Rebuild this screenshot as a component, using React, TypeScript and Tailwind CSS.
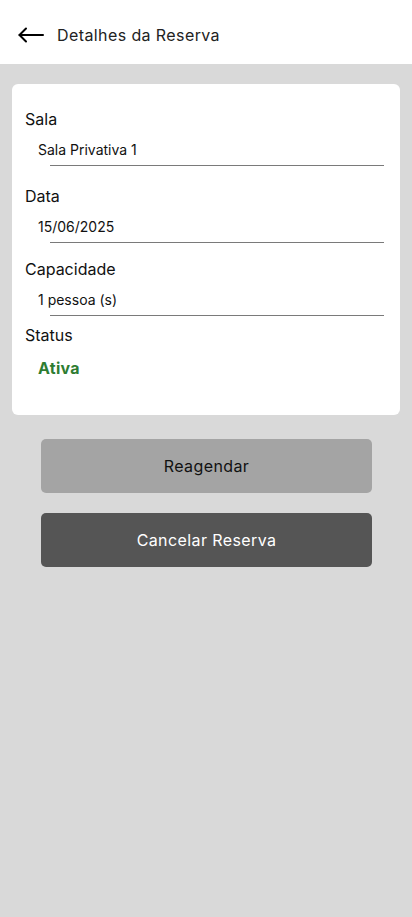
const font = { fontFamily: "Inter, 'Open Sans', sans-serif" };

function Field({ label, value, top }: { label: string; value: string; top: string }) {
    return (
        <div className={top}>
            <p className="text-[16px] leading-[24px] text-[#111]">{label}</p>
            <p className="mt-[9px] ml-[13px] text-[14px] leading-[20px] text-[#111]">{value}</p>
            <div className="ml-[25px] mt-[5px] h-[1px] bg-[#7a7a7a]" />
        </div>
    );
}

export default function App() {
    return (
        <div style={font} className="w-[412px] min-h-[917px] bg-[#d9d9d9] flex flex-col">
            <header className="h-[64px] bg-white flex items-center pl-[18px] pt-[6px]">
                <svg width="26" height="16" viewBox="0 0 26 16" fill="none" stroke="#000" strokeWidth="2" strokeLinecap="round" strokeLinejoin="round">
                    <path d="M25 8H1.5" />
                    <path d="M8 1.5L1.5 8L8 14.5" />
                </svg>
                <h1 className="ml-[13px] text-[16px] tracking-[0.4px] text-[#222]">Detalhes da Reserva</h1>
            </header>

            <main className="px-[12px] pt-[20px]">
                <div className="bg-white rounded-[6px] pl-[13px] pr-[16px] pt-[23px] pb-[37px]">
                    <Field label="Sala" value="Sala Privativa 1" top="" />
                    <Field label="Data" value="15/06/2025" top="mt-[18px]" />
                    <Field label="Capacidade" value="1 pessoa (s)" top="mt-[14px]" />
                    <div className="mt-[7px]">
                        <p className="text-[16px] leading-[24px] text-[#111]">Status</p>
                        <p className="mt-[11px] ml-[13px] text-[16px] leading-[20px] font-bold tracking-[0.3px] text-[#2e7d32]">Ativa</p>
                    </div>
                </div>

                <div className="mt-[24px] ml-[29px] w-[331px] flex flex-col gap-[20px]">
                    <button className="h-[54px] rounded-[5px] bg-[#a4a4a4] text-[16px] tracking-[0.4px] text-[#111]">Reagendar</button>
                    <button className="h-[54px] rounded-[5px] bg-[#555555] text-[16px] tracking-[0.4px] text-white">Cancelar Reserva</button>
                </div>
            </main>
        </div>
    );
}
